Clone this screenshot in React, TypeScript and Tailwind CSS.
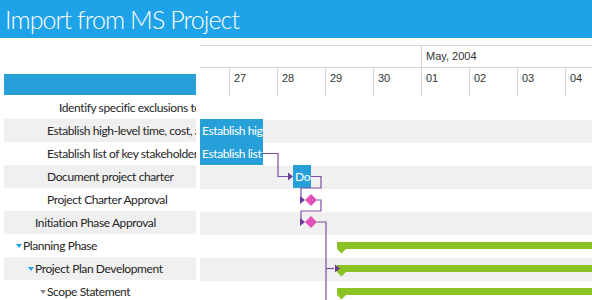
import React from 'react';

type Task = {
    title: string;
    level: number;
    expander?: 'blue' | 'gray';
};

const tasks: Task[] = [
    { title: 'Identify specific exclusions to scope', level: 3 },
    { title: 'Establish high-level time, cost, and quality objectives', level: 2 },
    { title: 'Establish list of key stakeholders', level: 2 },
    { title: 'Document project charter', level: 2 },
    { title: 'Project Charter Approval', level: 2 },
    { title: 'Initiation Phase Approval', level: 1 },
    { title: 'Planning Phase', level: 0, expander: 'blue' },
    { title: 'Project Plan Development', level: 1, expander: 'blue' },
    { title: 'Scope Statement', level: 2, expander: 'gray' },
];

const days = ['27', '28', '29', '30', '01', '02', '03', '04'];

const indents = ['pl-[12px]', 'pl-[24px]', 'pl-[36px]', 'pl-[48px]'];

const Expander = ({ color }: { color?: 'blue' | 'gray' }) => (
    <span className="w-[7px] flex items-center shrink-0">
        {color && (
            <svg width="6" height="4" viewBox="0 0 6 4">
                <polygon points="0,0 6,0 3,4" fill={color === 'blue' ? '#1ea2e8' : '#8a8a8a'} />
            </svg>
        )}
    </span>
);

const TaskList = () => (
    <div className="w-[200px] shrink-0 px-[4px]">
        <div className="h-[36px]" />
        <div className="h-[21px] bg-[#279fd8]" />
        <div className="h-[1px]" />
        {tasks.map((t, i) => (
            <div
                key={t.title}
                className={`flex h-[23px] items-center overflow-hidden whitespace-nowrap text-[12px] tracking-[-0.4px] text-[#262626] ${indents[t.level]} ${i % 2 === 1 ? 'bg-[#f0f0f0]' : ''}`}
            >
                <Expander color={t.expander} />
                <span>{t.title}</span>
            </div>
        ))}
    </div>
);

const Arrow = ({ x, y }: { x: number; y: number }) => (
    <polygon points={`${x - 5},${y - 4} ${x},${y} ${x - 5},${y + 4}`} fill="#6b3d98" />
);

const Diamond = ({ cx, cy }: { cx: number; cy: number }) => (
    <polygon points={`${cx},${cy - 6} ${cx + 6},${cy} ${cx},${cy + 6} ${cx - 6},${cy}`} fill="#e052b6" />
);

const Summary = ({ y }: { y: number }) => (
    <g fill="#8bc324">
        <rect x={137} y={y} width={260} height={7} />
        <polygon points={`137,${y + 7} 146,${y + 7} 141.5,${y + 11.5}`} />
    </g>
);

const barText = "absolute h-[23px] overflow-hidden whitespace-nowrap bg-[#27a0d9] pl-[2px] font-['Lato',sans-serif] text-[12px] tracking-[-0.4px] leading-[23px] text-white";

// coordinates in the svg are page coordinates (timeline starts at x=200, y=38)
const Timeline = () => (
    <div className="relative flex-1 font-['Liberation_Sans',Arial,sans-serif] text-[11px] text-[#333]">
        <div className="h-[7px]" />
        {/* month row */}
        <div className="flex h-[23px] border-y border-[#d6d6d6]">
            <div className="w-[222px] border-r border-[#d6d6d6]" />
            <div className="flex items-center pl-[4px]">May, 2004</div>
        </div>
        {/* day row */}
        <div className="flex h-[28px]">
            <div className="w-[30px] shrink-0 border-r border-[#d6d6d6]" />
            {days.map((d) => (
                <div key={d} className="w-[48px] shrink-0 border-r border-[#d6d6d6] pl-[4px] pt-[2px]">
                    {d}
                </div>
            ))}
        </div>
        <div className="h-[1px]" />
        {tasks.map((t, i) => (
            <div key={t.title} className={`h-[23px] ${i % 2 === 1 ? 'bg-[#f0f0f0]' : ''}`} />
        ))}

        {/* task bars */}
        <div className={`${barText} left-0 top-[81px] w-[63px]`}>
            Establish high-level time, cost, and quality objectives
        </div>
        <div className={`${barText} left-0 top-[104px] w-[63px]`}>
            Establish list of key stakeholders
        </div>
        <div className={`${barText} left-[93px] top-[127px] w-[18px]`}>
            Document project charter
        </div>

        {/* milestones, summaries and dependencies */}
        <svg className="pointer-events-none absolute left-0 top-[-38px]" width="392" height="300">
            <g fill="none" stroke="#7e4ea5" strokeWidth="1.2">
                <polyline points="63,153.5 78,153.5 78,176.5 90,176.5" />
                <polyline points="111,176.5 121,176.5 121,188 101,188 101,200 102,200" />
                <polyline points="117,200 121,200 121,211 101,211 101,222 102,222" />
                <polyline points="117,222 126,222 126,300" />
                <polyline points="126,268.5 134,268.5" />
            </g>
            <Arrow x={93} y={176.5} />
            <Diamond cx={111} cy={200} />
            <Arrow x={105} y={200} />
            <Diamond cx={111} cy={222} />
            <Arrow x={105} y={222} />
            <Summary y={242} />
            <Summary y={265} />
            <Summary y={288} />
            <Arrow x={140} y={268.5} />
        </svg>
    </div>
);

export default function App() {
    return (
        <div className="relative h-[300px] w-[592px] overflow-hidden bg-white font-['Lato',sans-serif]">
            <div className="h-[38px] bg-[#1ea2e8] pl-[5px] text-[25px] font-light leading-[38px] tracking-[-0.9px] text-white">
                Import from MS Project
            </div>
            <div className="flex">
                <TaskList />
                <Timeline />
            </div>
        </div>
    );
}
